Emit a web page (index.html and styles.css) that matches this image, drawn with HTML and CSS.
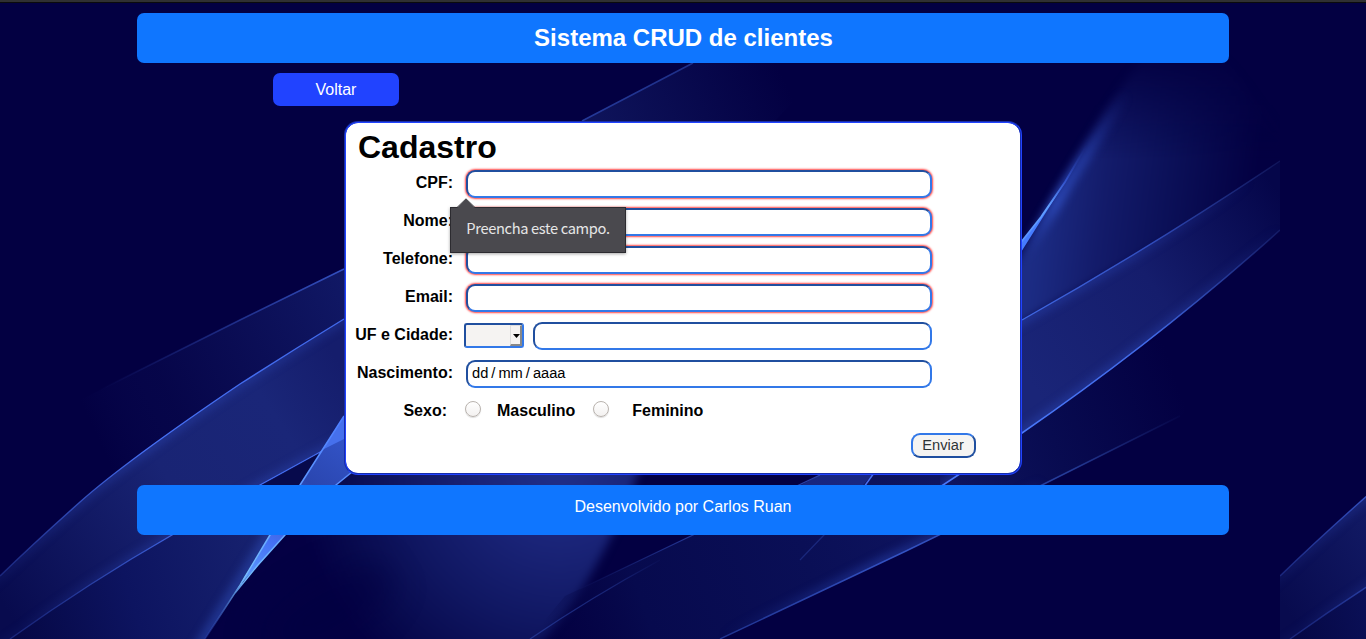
FILE: index.html
```html
<!DOCTYPE html>
<html lang="pt-BR">
<head>
<meta charset="utf-8">
<title>Sistema CRUD de clientes</title>
<link rel="stylesheet" href="styles.css">
</head>
<body>
<svg class="backdrop" width="1366" height="639" viewBox="0 0 1366 639" aria-hidden="true">
  <defs>
    <linearGradient id="fadeA" gradientUnits="userSpaceOnUse" x1="80" y1="400" x2="820" y2="60">
      <stop offset="0" stop-color="#18267c" stop-opacity="0"/><stop offset=".1" stop-color="#101660" stop-opacity=".25"/><stop offset=".35" stop-color="#111966" stop-opacity=".95"/><stop offset=".72" stop-color="#111860" stop-opacity=".8"/><stop offset=".95" stop-color="#101860" stop-opacity="0"/>
    </linearGradient>
    <linearGradient id="band" gradientUnits="userSpaceOnUse" x1="0" y1="600" x2="344" y2="370">
      <stop offset="0" stop-color="#080b4e"/><stop offset=".5" stop-color="#192474"/><stop offset=".8" stop-color="#1a2678"/><stop offset="1" stop-color="#151d6c"/>
    </linearGradient>
    <linearGradient id="lineB" gradientUnits="userSpaceOnUse" x1="0" y1="576" x2="344" y2="320">
      <stop offset="0" stop-color="#263a9c" stop-opacity=".6"/><stop offset=".45" stop-color="#4670f4"/><stop offset="1" stop-color="#4068ea"/>
    </linearGradient>
    <linearGradient id="glowB" gradientUnits="userSpaceOnUse" x1="0" y1="600" x2="344" y2="340">
      <stop offset="0" stop-color="#2f4bbb" stop-opacity=".2"/><stop offset=".5" stop-color="#2f4bbb"/><stop offset="1" stop-color="#2f4bbb" stop-opacity=".7"/>
    </linearGradient>
    <linearGradient id="lineA" gradientUnits="userSpaceOnUse" x1="100" y1="390" x2="693" y2="63">
      <stop offset="0" stop-color="#3048b0" stop-opacity="0"/><stop offset=".4" stop-color="#3350c0"/><stop offset="1" stop-color="#1e2f88"/>
    </linearGradient>
    <linearGradient id="under" gradientUnits="userSpaceOnUse" x1="20" y1="639" x2="270" y2="560">
      <stop offset="0" stop-color="#060846"/><stop offset=".45" stop-color="#0d1460"/><stop offset="1" stop-color="#17226f"/>
    </linearGradient>
    <linearGradient id="beam" gradientUnits="userSpaceOnUse" x1="350" y1="425" x2="235" y2="590">
      <stop offset="0" stop-color="#3557cc"/><stop offset=".35" stop-color="#2a46b0"/><stop offset=".7" stop-color="#4470f4"/><stop offset="1" stop-color="#66a8ff"/>
    </linearGradient>
    <linearGradient id="beamLine" gradientUnits="userSpaceOnUse" x1="344" y1="416" x2="205" y2="639">
      <stop offset="0" stop-color="#4c7cff"/><stop offset=".72" stop-color="#74bcff"/><stop offset="1" stop-color="#304ac0" stop-opacity=".3"/>
    </linearGradient>
    <radialGradient id="pool" gradientUnits="userSpaceOnUse" cx="560" cy="465" r="265">
      <stop offset="0" stop-color="#20308a"/><stop offset=".3" stop-color="#1a2478"/><stop offset=".6" stop-color="#101762"/><stop offset=".85" stop-color="#080a4e"/><stop offset="1" stop-color="#040044"/>
    </radialGradient>
    <linearGradient id="low" gradientUnits="userSpaceOnUse" x1="540" y1="620" x2="1180" y2="390">
      <stop offset="0" stop-color="#070848" stop-opacity="0"/><stop offset=".15" stop-color="#070a4e"/><stop offset=".4" stop-color="#0a0f56"/><stop offset=".62" stop-color="#0f1560"/><stop offset=".8" stop-color="#080b50"/><stop offset="1" stop-color="#030042"/>
    </linearGradient>
    <linearGradient id="lowLine" gradientUnits="userSpaceOnUse" x1="700" y1="639" x2="1190" y2="410">
      <stop offset="0" stop-color="#1d2f8a"/><stop offset=".4" stop-color="#3453c4"/><stop offset=".75" stop-color="#243a96"/><stop offset="1" stop-color="#203080" stop-opacity="0"/>
    </linearGradient>
    <linearGradient id="lowGlow" gradientUnits="userSpaceOnUse" x1="720" y1="639" x2="1042" y2="485">
      <stop offset="0" stop-color="#2b46b4" stop-opacity="0"/><stop offset=".5" stop-color="#2b46b4"/><stop offset="1" stop-color="#2b46b4" stop-opacity=".2"/>
    </linearGradient>
    <linearGradient id="lineE" gradientUnits="userSpaceOnUse" x1="575" y1="591" x2="820" y2="475">
      <stop offset="0" stop-color="#253a98" stop-opacity="0"/><stop offset=".45" stop-color="#2a40a4"/><stop offset="1" stop-color="#3450c0"/>
    </linearGradient>
    <linearGradient id="lineF" gradientUnits="userSpaceOnUse" x1="530" y1="639" x2="665" y2="555">
      <stop offset="0" stop-color="#253a98"/><stop offset=".6" stop-color="#253a98" stop-opacity=".7"/><stop offset="1" stop-color="#253a98" stop-opacity="0"/>
    </linearGradient>
    <linearGradient id="rightBand" gradientUnits="userSpaceOnUse" x1="1022" y1="370" x2="1280" y2="195">
      <stop offset="0" stop-color="#1a2578"/><stop offset=".5" stop-color="#151d6c"/><stop offset="1" stop-color="#05064a"/>
    </linearGradient>
    <linearGradient id="rightGlow" gradientUnits="userSpaceOnUse" x1="1022" y1="370" x2="1270" y2="205">
      <stop offset="0" stop-color="#2c48b8"/><stop offset=".5" stop-color="#2c48b8" stop-opacity=".8"/><stop offset="1" stop-color="#2c48b8" stop-opacity="0"/>
    </linearGradient>
    <linearGradient id="rightTop" gradientUnits="userSpaceOnUse" x1="1022" y1="320" x2="1280" y2="161">
      <stop offset="0" stop-color="#4068e4"/><stop offset=".5" stop-color="#304cbc"/><stop offset="1" stop-color="#172068" stop-opacity=".6"/>
    </linearGradient>
    <linearGradient id="rightLow" gradientUnits="userSpaceOnUse" x1="1022" y1="433" x2="1280" y2="230">
      <stop offset="0" stop-color="#4a78fa"/><stop offset=".5" stop-color="#4068e4"/><stop offset="1" stop-color="#1c2878" stop-opacity=".6"/>
    </linearGradient>
    <linearGradient id="fan" gradientUnits="userSpaceOnUse" x1="1040" y1="200" x2="1250" y2="225">
      <stop offset="0" stop-color="#1c2c84"/><stop offset=".3" stop-color="#131b6a"/><stop offset=".6" stop-color="#0b1058"/><stop offset="1" stop-color="#030042"/>
    </linearGradient>
    <linearGradient id="fanFade" gradientUnits="userSpaceOnUse" x1="0" y1="50" x2="0" y2="160">
      <stop offset="0" stop-color="#000"/><stop offset="1" stop-color="#fff"/>
    </linearGradient>
    <linearGradient id="ray" gradientUnits="userSpaceOnUse" x1="1022" y1="245" x2="1086" y2="146">
      <stop offset="0" stop-color="#5a92ff"/><stop offset=".4" stop-color="#62a0ff"/><stop offset=".65" stop-color="#3c62e4" stop-opacity=".7"/><stop offset="1" stop-color="#2238a0" stop-opacity="0"/>
    </linearGradient>
    <linearGradient id="rayGlow" gradientUnits="userSpaceOnUse" x1="1022" y1="250" x2="1125" y2="90">
      <stop offset="0" stop-color="#3050c8" stop-opacity=".1"/><stop offset=".3" stop-color="#3a60e0"/><stop offset=".6" stop-color="#3050c8" stop-opacity=".8"/><stop offset="1" stop-color="#2238a0" stop-opacity="0"/>
    </linearGradient>
    <filter id="soft" filterUnits="userSpaceOnUse" x="-60" y="-60" width="1440" height="800" color-interpolation-filters="sRGB"><feGaussianBlur stdDeviation="5"/></filter>
    <filter id="wide" filterUnits="userSpaceOnUse" x="-60" y="-60" width="1440" height="800" color-interpolation-filters="sRGB"><feGaussianBlur stdDeviation="16"/></filter>
    <mask id="fanMask" maskUnits="userSpaceOnUse" x="980" y="0" width="300" height="500"><rect x="980" width="300" height="500" fill="url(#fanFade)"/></mask>
    <clipPath id="bandClip"><path d="M0 576Q34 543 80 502T240 384Q290 352 344 319V439L260 485 172 535Q90 582 10 639H0Z"/></clipPath>
    <clipPath id="underClip"><path d="M10 639Q90 582 172 535L344 439V416L270 535 205 639Z"/></clipPath>
    <clipPath id="rightClip"><path d="M1022 320Q1150 248 1280 161V230Q1160 338 1022 433L940 487V366Z"/></clipPath>
    <clipPath id="lowClip"><path d="M530 639Q590 598 660 560L820 475H958L1022 433 1200 380 1180 416 1042 485 906 551 720 639Z"/></clipPath>
    <clipPath id="poolClip"><path d="M352 470L700 470V639H204L240 585 258 565 285 535 336 485Z"/></clipPath>
    <clipPath id="tile"><rect width="1280" height="639"/></clipPath>
    <g id="waves" clip-path="url(#tile)">
      <rect width="1280" height="639" fill="#030042"/>
      <path d="M80 400L240 320 344 269 582 121 693 63H830L700 200 344 330 240 384 80 502Z" fill="url(#fadeA)"/>
      <path d="M100 390L240 320 344 269M582 121L693 63" fill="none" stroke="url(#lineA)" stroke-width="1.5"/>
      <g clip-path="url(#poolClip)">
        <path d="M340 450L645 450Q632 500 596 565T520 660H190L240 585 285 535Z" fill="url(#pool)" filter="url(#soft)"/>
        <ellipse cx="325" cy="612" rx="75" ry="34" transform="rotate(-30 325 612)" fill="#030042" opacity=".6" filter="url(#wide)"/>
      </g>
      <path d="M10 639Q90 582 172 535L344 439V416L270 535 205 639Z" fill="url(#under)"/>
      <g clip-path="url(#underClip)">
        <path d="M285 510L185 671" stroke="#3050bc" stroke-width="12" opacity=".5" filter="url(#soft)"/>
      </g>
      <path d="M0 576Q34 543 80 502T240 384Q290 352 344 319V439L260 485 172 535Q90 582 10 639H0Z" fill="url(#band)"/>
      <g clip-path="url(#bandClip)">
        <path d="M-30 603L0 576Q34 543 80 502T240 384Q290 352 344 319L380 297M-20 660L10 639Q90 582 172 535L260 485 344 439" fill="none" stroke="url(#glowB)" stroke-width="8" opacity=".5" filter="url(#soft)"/>
      </g>
      <path d="M0 576Q34 543 80 502T240 384Q290 352 344 319M10 639Q90 582 172 535L260 485 344 439" fill="none" stroke="url(#lineB)" stroke-width="1.4"/>
      <path d="M262 485L320 453 300 485Z" fill="#070a4c"/>
      <path d="M344 416L300 485 270 535 240 585 258 565 285 535 336 485 360 465V416Z" fill="url(#beam)"/>
      <path d="M322 450L344 439V416Z" fill="#4670ec"/>
      <path d="M344 416L300 485 270 535 240 585 205 639M352 472L336 485 285 535 258 565 235 593" fill="none" stroke="url(#beamLine)" stroke-width="1.5"/>
      <path d="M565 596L580 589 693 535 820 475H958L1022 433 1240 280Q1220 390 1180 416L1042 485 906 551 720 639H530Q545 620 565 596Z" fill="url(#low)"/>
      <g clip-path="url(#lowClip)">
        <path d="M720 639L906 551 1042 485" stroke="url(#lowGlow)" stroke-width="10" opacity=".55" filter="url(#soft)" fill="none"/>
        <path d="M790 490L820 475H872L850 500Z" fill="#2438a0" opacity=".55"/>
      </g>
      <path d="M720 639L906 551 1042 485 1180 416" fill="none" stroke="url(#lowLine)" stroke-width="1.4"/>
      <path d="M580 589L693 535 820 475" fill="none" stroke="url(#lineE)" stroke-width="1.3" opacity=".8"/>
      <path d="M530 639Q590 598 660 560" fill="none" stroke="url(#lineF)" stroke-width="1.3" opacity=".8"/>
      <path d="M874 473L864 487" fill="none" stroke="#4a70f0" stroke-width="1.4"/>
      <path d="M864 487L824 535 800 560" fill="none" stroke="#2c44a8" stroke-width="1.2" opacity=".45"/>
      <g mask="url(#fanMask)"><path d="M1000 288L1065 180 1110 104 1150 45H1215L1300 165 1000 335Z" fill="url(#fan)" filter="url(#soft)"/></g>
      <path d="M1022 258L1053 208 1068 182 1130 85" fill="none" stroke="url(#rayGlow)" stroke-width="11" opacity=".65" filter="url(#soft)"/>
      <path d="M1018 246L1041 217 1060 190 1018 257Z" fill="#467cff"/>
      <path d="M1018 246L1041 217 1065 182Q1078 160 1092 136" fill="none" stroke="url(#ray)" stroke-width="1.8"/>
      <path d="M1022 320Q1150 248 1280 161V230Q1160 338 1022 433L960 474V366Z" fill="url(#rightBand)"/>
      <g clip-path="url(#rightClip)"><path d="M1000 332L1022 320Q1150 248 1280 161M940 487L1022 433Q1160 338 1280 230" fill="none" stroke="url(#rightGlow)" stroke-width="9" opacity=".5" filter="url(#soft)"/></g>
      <path d="M1022 320Q1150 248 1280 161" fill="none" stroke="url(#rightTop)" stroke-width="1.4"/>
      <path d="M940 487L1022 433Q1160 338 1280 230" fill="none" stroke="url(#rightLow)" stroke-width="1.5"/>
    </g>
  </defs>
  <use href="#waves"/>
  <use href="#waves" x="1280"/>
</svg>
<div class="page">
  <header class="bar title">Sistema CRUD de clientes</header>
  <a class="back">Voltar</a>
  <main class="card">
    <h1>Cadastro</h1>
    <div class="row"><label>CPF:</label>
      <div class="anchor"><input class="field required">
        <div class="tip"><svg class="arrow" width="18" height="10" viewBox="0 0 18 10"><path d="M0 10L9 1 18 10Z" fill="#4a494e"/><path d="M0 9.5L9 .8 18 9.5" fill="none" stroke="#39383d"/></svg><span>Preencha este campo.</span></div>
      </div>
    </div>
    <div class="row"><label>Nome:</label><input class="field required"></div>
    <div class="row"><label>Telefone:</label><input class="field required"></div>
    <div class="row"><label>Email:</label><input class="field required"></div>
    <div class="row"><label>UF e Cidade:</label>
      <div class="place"><div class="state"><span class="drop"><svg width="7" height="4" viewBox="0 0 7 4"><path d="M0 0H7L3.5 4Z"/></svg></span></div><input class="field city"></div>
    </div>
    <div class="row"><label>Nascimento:</label><div class="field date"><span>dd</span><span>/</span><span>mm</span><span>/</span><span>aaaa</span></div></div>
    <div class="row sex"><label>Sexo:</label><div class="choices"><i class="radio"></i><b>Masculino</b><i class="radio second"></i><b>Feminino</b></div></div>
    <button class="send">Enviar</button>
  </main>
  <footer class="bar foot">Desenvolvido por Carlos Ruan</footer>
</div>
</body>
</html>
```
FILE: styles.css
```css
* { box-sizing: border-box; }
body {
  margin: 0;
  height: 639px;
  overflow: hidden;
  background: #030042;
  font: 16px/18px "Liberation Sans", Arial, sans-serif;
}
.backdrop { position: absolute; inset: 0; z-index: -1; }
.page {
  height: 639px;
  border-top: 2px solid #303032;
  box-shadow: inset 0 1px #0b0b0c;
  padding: 11px 137px 0;
}
.bar {
  height: 50px;
  border-radius: 7px;
  background: #0f76ff;
  color: #fff;
  text-align: center;
}
.title { padding-left: 1px; font-size: 24px; font-weight: bold; line-height: 50px; }
.back {
  display: block;
  width: 126px;
  height: 33px;
  margin: 10px 0 0 136px;
  border-radius: 7px;
  background: #2143ff;
  color: #fff;
  line-height: 33px;
  text-align: center;
}
.card {
  display: flex;
  flex-direction: column;
  width: 678px;
  height: 354px;
  margin: 15px 0 10px 207px;
  padding: 6px 0 0 9px;
  border: 2px groove #2143ff;
  border-radius: 14px;
  background: #fff;
}
h1 { margin: 0 0 4px 3px; font-size: 32px; line-height: 37px; }
.row {
  display: grid;
  grid-template-columns: 98px 466px;
  column-gap: 13px;
  height: 38px;
  font-weight: bold;
}
.row label { padding-top: 4px; text-align: right; white-space: nowrap; }
.field {
  display: block;
  width: 466px;
  height: 28px;
  border: 2px solid;
  border-color: #204f9f #3278e8 #3278e8 #204f9f;
  border-radius: 9px;
  background: #fff;
  outline: none;
}
.required { box-shadow: 0 0 2px 1px #ff4848; }
.anchor { position: relative; }
.tip {
  position: absolute;
  z-index: 2;
  left: -16px;
  top: 37px;
  width: 176px;
  height: 46px;
  border: 1px solid #2c2b30;
  background: #4a494e;
  box-shadow: 0 1px 3px rgba(0,0,0,.35);
  color: #e6e6e6;
  font: 14.67px/40px "Noto Sans CJK SC", "Noto Sans", sans-serif;
  letter-spacing: -.35px;
  text-align: center;
}
.arrow { position: absolute; left: 6px; top: -10px; }
.place { display: flex; gap: 9px; margin-left: -2px; }
.state {
  display: flex;
  justify-content: flex-end;
  width: 60px;
  height: 25px;
  margin-top: 1px;
  border: 2px solid;
  border-color: #204f9f #3278e8 #3278e8 #204f9f;
  border-radius: 3px;
  background: #f5f3f2;
}
.drop {
  display: grid;
  place-items: center;
  width: 12px;
  height: 21px;
  padding: 2px 0 0 1px;
  border: 1px solid;
  border-color: #ddd #888 #888 #ddd;
  border-right-width: 2px;
  border-bottom-width: 2px;
  background: #f5f3f2;
}
.city { width: 399px; }
.date { display: flex; gap: 3px; padding: 2px 4px; font-size: 14.67px; font-weight: normal; }
.sex label { padding-right: 6px; }
.choices { display: flex; padding-top: 4px; }
.radio {
  width: 16px;
  height: 16px;
  margin: -1px 16px 0 -1px;
  border: 1px solid #b9b3ae;
  border-radius: 50%;
  background: linear-gradient(#fff, #f3f1f0);
  box-shadow: 0 1px 1px #ddd;
}
.second { margin: -1px 23px 0 18px; }
.send {
  width: 65px;
  height: 25px;
  margin: -3px 0 0 556px;
  padding: 0 1px 2px 0;
  border: 2px solid;
  border-color: #3278e8 #204f9f #204f9f #3278e8;
  border-radius: 9px;
  background: #f5f4f2;
  color: #2e3436;
  font: 14.67px/18px "Liberation Sans", Arial, sans-serif;
}
.foot { padding-top: 13px; }
```
